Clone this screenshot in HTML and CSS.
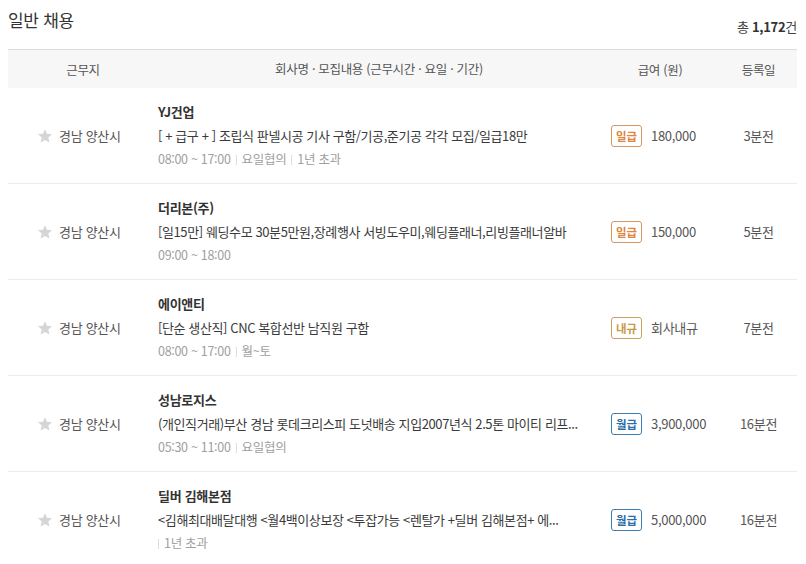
FILE: index.html
```html
<!DOCTYPE html>
<html lang="ko">
<head>
<meta charset="utf-8">
<link rel="stylesheet" href="styles.css">
</head>
<body>
<div class="top">
  <h2 class="title">일반 채용</h2>
  <div class="total">총 <b>1,172</b>건</div>
</div>
<div class="table">
  <div class="thead">
    <div class="c-loc">근무지</div>
    <div class="c-info">회사명 · 모집내용 (근무시간 · 요일 · 기간)</div>
    <div class="c-pay">급여 (원)</div>
    <div class="c-date">등록일</div>
  </div>

  <div class="row">
    <div class="c-loc loc"><svg class="star" viewBox="0 0 24 24"><path d="M12 1.8l3.1 7 7.5.6-5.7 5 1.8 7.4L12 17.9l-6.7 3.9 1.8-7.4-5.7-5 7.5-.6z"/></svg>경남 양산시</div>
    <div class="c-info">
      <div class="co">YJ건업</div>
      <div class="desc">[ + 급구 + ] 조립식 판넬시공 기사 구함/기공,준기공 각각 모집/일급18만</div>
      <div class="meta"><span>08:00 ~ 17:00</span><span>요일협의</span><span>1년 초과</span></div>
    </div>
    <div class="c-pay pay"><span class="badge orange">일급</span>180,000</div>
    <div class="c-date date">3분전</div>
  </div>

  <div class="row">
    <div class="c-loc loc"><svg class="star" viewBox="0 0 24 24"><path d="M12 1.8l3.1 7 7.5.6-5.7 5 1.8 7.4L12 17.9l-6.7 3.9 1.8-7.4-5.7-5 7.5-.6z"/></svg>경남 양산시</div>
    <div class="c-info">
      <div class="co">더리본(주)</div>
      <div class="desc">[일15만] 웨딩수모 30분5만원,장례행사 서빙도우미,웨딩플래너,리빙플래너알바</div>
      <div class="meta"><span>09:00 ~ 18:00</span></div>
    </div>
    <div class="c-pay pay"><span class="badge orange">일급</span>150,000</div>
    <div class="c-date date">5분전</div>
  </div>

  <div class="row">
    <div class="c-loc loc"><svg class="star" viewBox="0 0 24 24"><path d="M12 1.8l3.1 7 7.5.6-5.7 5 1.8 7.4L12 17.9l-6.7 3.9 1.8-7.4-5.7-5 7.5-.6z"/></svg>경남 양산시</div>
    <div class="c-info">
      <div class="co">에이앤티</div>
      <div class="desc">[단순 생산직] CNC 복합선반 남직원 구함</div>
      <div class="meta"><span>08:00 ~ 17:00</span><span>월~토</span></div>
    </div>
    <div class="c-pay pay"><span class="badge gold">내규</span>회사내규</div>
    <div class="c-date date">7분전</div>
  </div>

  <div class="row">
    <div class="c-loc loc"><svg class="star" viewBox="0 0 24 24"><path d="M12 1.8l3.1 7 7.5.6-5.7 5 1.8 7.4L12 17.9l-6.7 3.9 1.8-7.4-5.7-5 7.5-.6z"/></svg>경남 양산시</div>
    <div class="c-info">
      <div class="co">성남로지스</div>
      <div class="desc">(개인직거래)부산 경남 롯데크리스피 도넛배송 지입2007년식 2.5톤 마이티 리프...</div>
      <div class="meta"><span>05:30 ~ 11:00</span><span>요일협의</span></div>
    </div>
    <div class="c-pay pay"><span class="badge blue">월급</span>3,900,000</div>
    <div class="c-date date">16분전</div>
  </div>

  <div class="row">
    <div class="c-loc loc"><svg class="star" viewBox="0 0 24 24"><path d="M12 1.8l3.1 7 7.5.6-5.7 5 1.8 7.4L12 17.9l-6.7 3.9 1.8-7.4-5.7-5 7.5-.6z"/></svg>경남 양산시</div>
    <div class="c-info">
      <div class="co">딜버 김해본점</div>
      <div class="desc">&lt;김해최대배달대행 &lt;월4백이상보장 &lt;투잡가능 &lt;렌탈가 +딜버 김해본점+ 에...</div>
      <div class="meta"><span class="first-sep">1년 초과</span></div>
    </div>
    <div class="c-pay pay"><span class="badge blue">월급</span>5,000,000</div>
    <div class="c-date date">16분전</div>
  </div>
</div>
</body>
</html>
```

FILE: styles.css
```css
html, body {
  margin: 0;
  padding: 0;
  background: #fff;
}
body {
  padding: 8px 9px 0 8px;
  font-family: "Noto Sans CJK KR", "Noto Sans", sans-serif;
  color: #333;
  font-size: 13px;
  letter-spacing: -0.3px;
}
.top {
  display: flex;
  justify-content: space-between;
  align-items: flex-end;
  height: 41px;
  border-bottom: 1px solid #dcdcdc;
}
.title {
  margin: 0;
  align-self: flex-start;
  font-size: 17px;
  font-weight: 400;
  line-height: 24px;
  color: #333;
}
.total {
  font-size: 13px;
  color: #444;
  line-height: 20px;
  margin-bottom: 12px;
}
.total b {
  font-weight: 700;
  color: #333;
}
.thead {
  display: flex;
  align-items: center;
  height: 38px;
  background: #f7f7f7;
  color: #555;
  font-size: 12.5px;
}
.thead > div {
  text-align: center;
}
.c-loc { width: 150px; flex: none; }
.c-info { width: 442px; flex: none; }
.c-pay { width: 120px; flex: none; }
.c-date { width: 77px; flex: none; }
.row {
  display: flex;
  align-items: center;
  height: 95px;
  border-bottom: 1px solid #ececec;
}
.loc {
  display: flex;
  align-items: center;
  justify-content: flex-start;
  gap: 6px;
  color: #555;
  font-size: 13px;
  padding-left: 29px;
  box-sizing: border-box;
}
.star {
  width: 16px;
  height: 16px;
  fill: #d6d6d6;
}
.c-info {
  line-height: 23.5px;
  min-width: 0;
}
.co {
  font-weight: 700;
  font-size: 13px;
  color: #333;
}
.desc {
  white-space: nowrap;
  color: #3a3a3a;
  letter-spacing: -0.4px;
}
.meta {
  font-size: 12.5px;
  color: #a0a0a0;
  display: flex;
  align-items: center;
}
.meta span + span::before,
.meta .first-sep::before {
  content: "";
  display: inline-block;
  width: 1px;
  height: 10px;
  background: #ddd;
  margin: 0 5px;
  vertical-align: -1px;
}
.meta .first-sep::before {
  margin-left: 0;
}
.pay {
  display: flex;
  align-items: center;
  gap: 9px;
  padding-left: 11px;
  box-sizing: border-box;
  color: #555;
  font-size: 13px;
}
.badge {
  display: inline-flex;
  align-items: center;
  justify-content: center;
  width: 31px;
  height: 22px;
  box-sizing: border-box;
  border: 1px solid;
  border-radius: 3px;
  font-size: 11.5px;
  font-weight: 700;
  letter-spacing: 0;
}
.badge.orange { color: #e0843f; border-color: #d8955e; }
.badge.gold { color: #c99a45; border-color: #c8a060; }
.badge.blue { color: #2b6fa8; border-color: #3c7eb4; }
.date {
  text-align: center;
  color: #555;
  font-size: 13px;
}
```
